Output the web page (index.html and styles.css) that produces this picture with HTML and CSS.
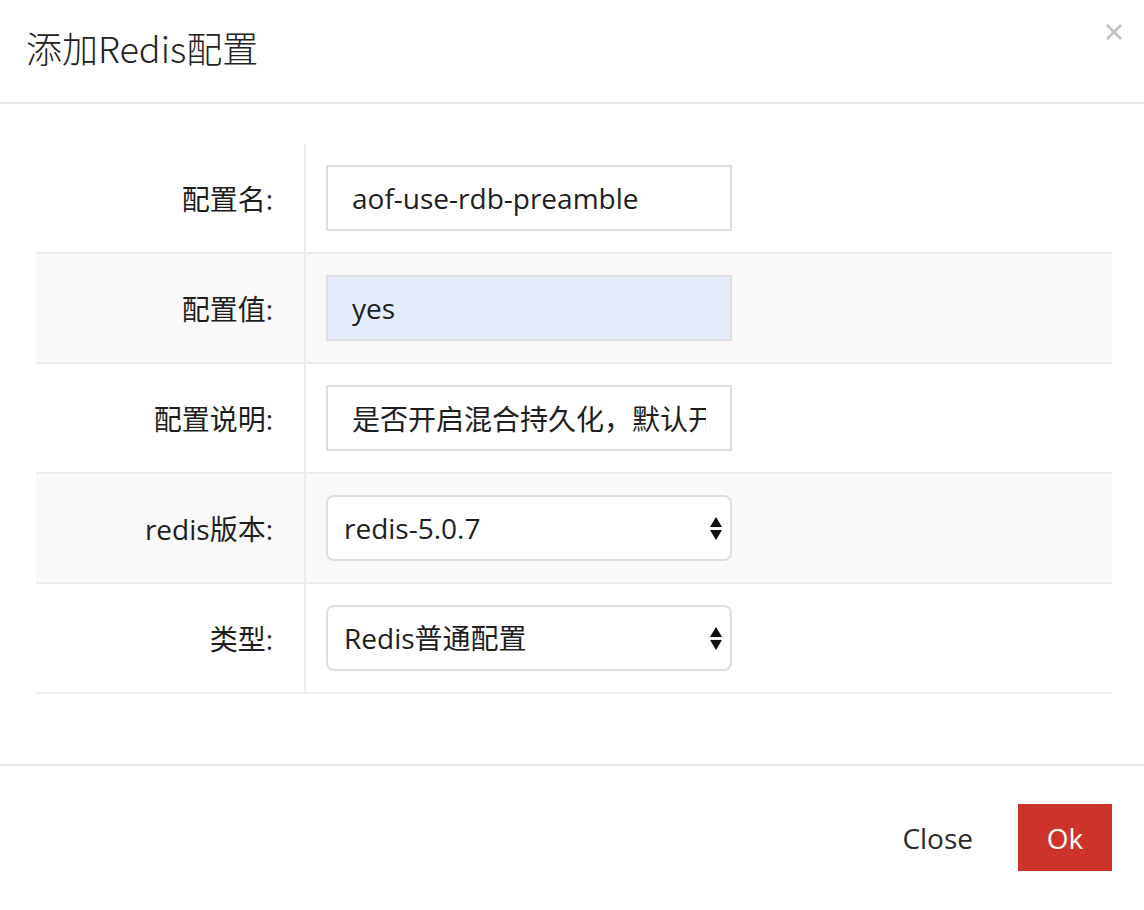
FILE: index.html
```html
<!DOCTYPE html>
<html lang="zh-CN">
<head>
<meta charset="utf-8">
<title>添加Redis配置</title>
<link rel="stylesheet" href="styles.css">
</head>
<body>
<div class="modal">
  <div class="modal-header">
    <h4 class="modal-title">添加Redis配置</h4>
    <button class="close-x" aria-label="Close">
      <svg width="18" height="18" viewBox="0 0 18 18"><path d="M2 2 L16 16 M16 2 L2 16" stroke="#c4c4c4" stroke-width="2.6" fill="none"/></svg>
    </button>
  </div>
  <div class="modal-body">
    <div class="form-table">
      <div class="row">
        <div class="label">配置名:</div>
        <div class="field"><input class="input" type="text" value="aof-use-rdb-preamble"></div>
      </div>
      <div class="row alt">
        <div class="label">配置值:</div>
        <div class="field"><input class="input focused" type="text" value="yes"></div>
      </div>
      <div class="row">
        <div class="label">配置说明:</div>
        <div class="field"><input class="input" type="text" value="是否开启混合持久化，默认开启"></div>
      </div>
      <div class="row alt">
        <div class="label">redis版本:</div>
        <div class="field"><div class="select-wrap"><select class="select"><option>redis-5.0.7</option></select></div></div>
      </div>
      <div class="row">
        <div class="label">类型:</div>
        <div class="field"><div class="select-wrap"><select class="select"><option>Redis普通配置</option></select></div></div>
      </div>
    </div>
  </div>
  <div class="modal-footer">
    <button class="btn btn-close">Close</button>
    <button class="btn btn-ok">Ok</button>
  </div>
</div>
</body>
</html>
```
FILE: styles.css
```css
* { box-sizing: border-box; }
html, body { margin: 0; padding: 0; background: #fff; }
body {
  font-family: "Open Sans", "Noto Sans CJK SC", sans-serif;
  color: #333;
}
.modal { width: 1144px; }
.modal-header {
  height: 104px;
  border-bottom: 2px solid #e5e5e5;
  padding: 0 26px;
  display: flex;
  align-items: flex-start;
  justify-content: space-between;
}
.modal-title {
  margin: 0;
  padding-top: 22px;
  font-family: "Noto Sans CJK SC", sans-serif;
  font-weight: 300;
  font-size: 36px;
  line-height: 50px;
  color: #222;
}
.close-x {
  border: 0;
  background: transparent;
  padding: 0;
  margin-top: 23px;
  margin-right: -5px;
  width: 18px;
  height: 18px;
  display: flex;
}
.modal-body {
  padding: 40px 32px 70px 36px;
}
.form-table { display: flex; flex-direction: column; }
.row {
  display: flex;
  height: 110px;
  border-bottom: 2px solid #ececec;
}
.row.alt { background: #f9f9f9; }
.label {
  width: 270px;
  border-right: 2px solid #ececec;
  display: flex;
  align-items: center;
  justify-content: flex-end;
  padding-right: 31px;
  font-family: "Open Sans", "Noto Sans CJK SC", sans-serif;
  font-size: 28px;
  color: #1e1e1e;
}
.field {
  flex: 1;
  display: flex;
  align-items: center;
  padding-left: 20px;
}
.input {
  width: 406px;
  height: 66px;
  border: 2px solid #dedede;
  background: #fff;
  padding: 0 24px;
  font-family: "Open Sans", "Noto Sans CJK SC", sans-serif;
  font-size: 28px;
  color: #1e1e1e;
  outline: none;
  border-radius: 0;
}
.input.focused { background: #e4ecfc; }
.select-wrap {
  position: relative;
  width: 406px;
  height: 66px;
}
.select-wrap::before,
.select-wrap::after {
  content: "";
  position: absolute;
  right: 10px;
  width: 0;
  height: 0;
  border-left: 6px solid transparent;
  border-right: 6px solid transparent;
  pointer-events: none;
}
.select-wrap::before {
  top: 22px;
  border-bottom: 10px solid #111;
}
.select-wrap::after {
  top: 35px;
  border-top: 10px solid #111;
}
.select {
  -webkit-appearance: none;
  appearance: none;
  width: 100%;
  height: 100%;
  border: 2px solid #dedede;
  border-radius: 8px;
  background: #fff;
  padding: 0 16px;
  font-family: "Open Sans", "Noto Sans CJK SC", sans-serif;
  font-size: 28px;
  color: #1e1e1e;
  outline: none;
}
.modal-footer {
  border-top: 2px solid #e5e5e5;
  padding: 38px 32px 39px 0;
  display: flex;
  justify-content: flex-end;
  align-items: center;
}
.btn {
  height: 67px;
  border: 0;
  font-family: "Open Sans", sans-serif;
  font-size: 28px;
  cursor: pointer;
}
.btn-close {
  background: transparent;
  color: #2a2a2a;
  padding: 0 24px;
  margin-right: 21px;
}
.btn-ok {
  background: #cc342b;
  color: #fff;
  width: 94px;
  padding: 0;
}
```
